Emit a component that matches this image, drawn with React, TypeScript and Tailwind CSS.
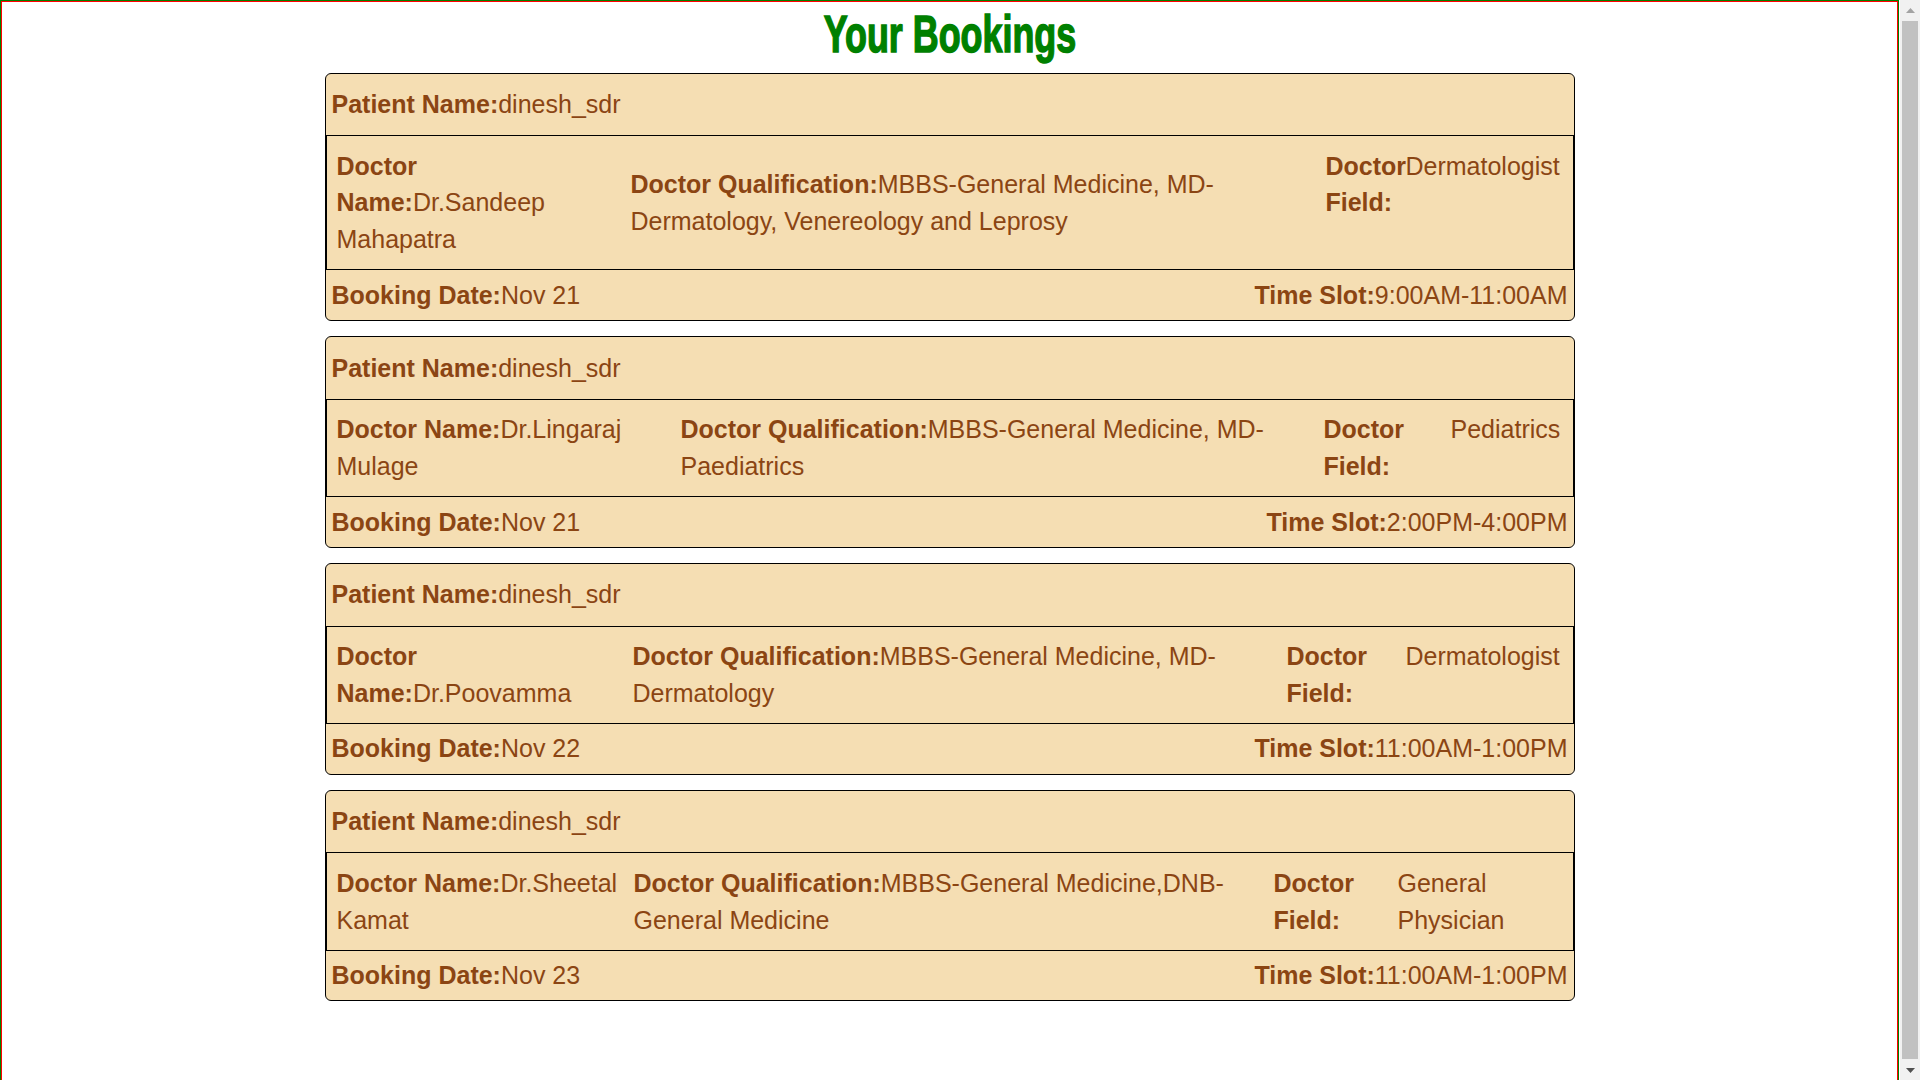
const bookings = [
  {
    patient: "dinesh_sdr",
    doctor: "Dr.Sandeep Mahapatra",
    qualification: "MBBS-General Medicine, MD-Dermatology, Venereology and Leprosy",
    field: "Dermatologist",
    date: "Nov 21",
    slot: "9:00AM-11:00AM",
    cols: "grid-cols-[294px_695px_80px_1fr]",
  },
  {
    patient: "dinesh_sdr",
    doctor: "Dr.Lingaraj Mulage",
    qualification: "MBBS-General Medicine, MD-Paediatrics",
    field: "Pediatrics",
    date: "Nov 21",
    slot: "2:00PM-4:00PM",
    cols: "grid-cols-[344px_643px_127px_1fr]",
  },
  {
    patient: "dinesh_sdr",
    doctor: "Dr.Poovamma",
    qualification: "MBBS-General Medicine, MD-Dermatology",
    field: "Dermatologist",
    date: "Nov 22",
    slot: "11:00AM-1:00PM",
    cols: "grid-cols-[296px_654px_119px_1fr]",
  },
  {
    patient: "dinesh_sdr",
    doctor: "Dr.Sheetal Kamat",
    qualification: "MBBS-General Medicine,DNB-General Medicine",
    field: "General Physician",
    date: "Nov 23",
    slot: "11:00AM-1:00PM",
    cols: "grid-cols-[297px_640px_124px_1fr]",
  },
];

type Booking = (typeof bookings)[number];

function BookingCard({ b }: { b: Booking }) {
  return (
    <div className="rounded-[6px] border border-black bg-[#f5deb3]">
      {/* patient */}
      <div className="px-[6px] py-[12.5px]">
        <span className="font-bold">Patient Name:</span>
        {b.patient}
      </div>

      {/* doctor details */}
      <div
        className={`grid ${b.cols} border border-black pl-[10px] pr-[11px] py-[11.5px]`}
      >
        <div className="self-center">
          <span className="font-bold">Doctor Name:</span>
          {b.doctor}
        </div>
        <div className="self-center pr-[20px]">
          <span className="font-bold">Doctor Qualification:</span>
          {b.qualification}
        </div>
        <div className="self-start font-bold">Doctor Field:</div>
        <div className="self-start">{b.field}</div>
      </div>

      {/* date + slot */}
      <div className="flex justify-between px-[6px] py-[6.5px]">
        <div>
          <span className="font-bold">Booking Date:</span>
          {b.date}
        </div>
        <div>
          <span className="font-bold">Time Slot:</span>
          {b.slot}
        </div>
      </div>
    </div>
  );
}

function Scrollbar() {
  return (
    <div className="flex h-full w-[20px] flex-col bg-[#f1f1f1]">
      <div className="flex h-[20px] items-center justify-center">
        <svg width="9" height="5" viewBox="0 0 9 5">
          <path d="M0 5 L4.5 0 L9 5 Z" fill="#a3a3a3" />
        </svg>
      </div>
      <div className="mx-[2px] my-[1px] flex-1 bg-[#c1c1c1]" />
      <div className="flex h-[20px] items-center justify-center">
        <svg width="9" height="5" viewBox="0 0 9 5">
          <path d="M0 0 L9 0 L4.5 5 Z" fill="#505050" />
        </svg>
      </div>
    </div>
  );
}

export default function App() {
  return (
    <div className="flex h-screen w-full overflow-hidden bg-white">
      <div className="w-[1900px] shrink-0">
        <div className="h-[1110px] w-[1899px] border border-[#008000]">
          <div className="h-full border border-[#ff0000] font-['Liberation_Sans',Arial,sans-serif] text-[25px] leading-[36.7px] text-[#8b4513]">
            <h1 className="h-[70.5px] text-center font-['Liberation_Sans',Arial,sans-serif] text-[52px] font-bold leading-[64px] text-[#008000]">
              <span className="inline-block scale-x-[0.69] [-webkit-text-stroke:1.5px_#008000]">
                Your Bookings
              </span>
            </h1>
            <div className="mx-auto flex w-[1250px] flex-col gap-[15px]">
              {bookings.map((b, i) => (
                <BookingCard key={i} b={b} />
              ))}
            </div>
          </div>
        </div>
      </div>
      <Scrollbar />
    </div>
  );
}
